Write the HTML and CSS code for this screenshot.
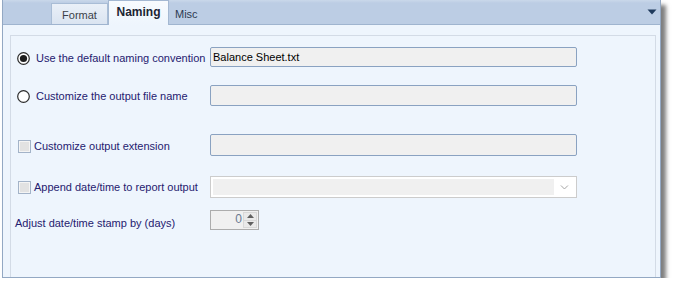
FILE: index.html
```html
<!DOCTYPE html>
<html>
<head>
<meta charset="utf-8">
<link rel="stylesheet" href="styles.css">
</head>
<body>
<div class="window">
  <div class="header">
    <div class="tab tab-format">Format</div>
    <div class="tab tab-active">Naming</div>
    <div class="tab tab-plain">Misc</div>
    <svg class="menu-arrow" width="10" height="6" viewBox="0 0 10 6"><path d="M0.5 0.5 H9.5 L5 5.5 Z" fill="#1f3a5c"/></svg>
  </div>
  <div class="content">
    <div class="group">
      <div class="row row1">
        <div class="ctrl radio-ctrl">
          <svg class="radio" width="13" height="13" viewBox="0 0 13 13"><circle cx="6.5" cy="6.5" r="5.8" fill="#fff" stroke="#2b2b2b" stroke-width="1.2"/><circle cx="6.5" cy="6.5" r="3.6" fill="#1c1c1c"/></svg>
          <span class="lbl">Use the default naming convention</span>
        </div>
        <div class="textbox">Balance Sheet.txt</div>
      </div>
      <div class="row row2">
        <div class="ctrl radio-ctrl">
          <svg class="radio" width="13" height="13" viewBox="0 0 13 13"><circle cx="6.5" cy="6.5" r="5.8" fill="#fff" stroke="#2b2b2b" stroke-width="1.2"/></svg>
          <span class="lbl">Customize the output file name</span>
        </div>
        <div class="textbox"></div>
      </div>
      <div class="row row3">
        <div class="ctrl check-ctrl">
          <span class="check"></span>
          <span class="lbl">Customize output extension</span>
        </div>
        <div class="textbox"></div>
      </div>
      <div class="row row4">
        <div class="ctrl check-ctrl">
          <span class="check"></span>
          <span class="lbl">Append date/time to report output</span>
        </div>
        <div class="combo">
          <div class="combo-fill"></div>
          <svg class="chev" width="20" height="16" viewBox="0 0 20 16"><path d="M7 6.5 L10.5 10 L14 6.5" fill="none" stroke="#a3a3a3" stroke-width="1"/></svg>
        </div>
      </div>
      <div class="row row5">
        <div class="ctrl plain-ctrl">
          <span class="lbl">Adjust date/time stamp by (days)</span>
        </div>
        <div class="spinner">
          <span class="spin-val">0</span>
          <div class="spin-btns">
            <div class="spin-btn"><svg width="7" height="4" viewBox="0 0 7 4"><path d="M0 4 L3.5 0 L7 4 Z" fill="#606060"/></svg></div>
            <div class="spin-btn"><svg width="7" height="4" viewBox="0 0 7 4"><path d="M0 0 L3.5 4 L7 0 Z" fill="#606060"/></svg></div>
          </div>
        </div>
      </div>
    </div>
  </div>
</div>
</body>
</html>
```

FILE: styles.css
```css
html, body {
  margin: 0;
  padding: 0;
  background: #ffffff;
}
body {
  padding-left: 2px;
  font-family: "Liberation Sans", Arial, sans-serif;
  font-size: 11px;
}
.window {
  box-sizing: border-box;
  width: 659px;
  height: 278px;
  border: 1px solid #93a8c3;
  border-top: none;
  display: flex;
  flex-direction: column;
  background: #eef5fd;
  box-shadow: 5px 5px 4px rgba(0, 0, 0, 0.5);
}
.header {
  box-sizing: border-box;
  height: 25px;
  flex: none;
  display: flex;
  align-items: flex-end;
  padding-left: 48px;
  background: linear-gradient(#cad8ea, #bccde4 3px, #bccde4);
  border-bottom: 1px solid #9fb4cf;
}
.tab {
  box-sizing: border-box;
  display: flex;
  align-items: center;
  justify-content: center;
  font-size: 11px;
}
.tab-format {
  width: 57px;
  height: 21px;
  margin-bottom: 0;
  color: #3a3f48;
  background: linear-gradient(#eaf0f8, #dae4f1);
  border: 1px solid #a9bdd6;
  border-bottom: none;
  padding-top: 1px;
}
.tab-active {
  width: 61px;
  height: 25px;
  margin-bottom: -1px;
  color: #1c2433;
  font-weight: bold;
  font-size: 12px;
  background: linear-gradient(#f8fbfe, #eef5fd);
  border: 1px solid #a4b8d2;
  border-bottom: none;
  padding-bottom: 2px;
}
.tab-plain {
  justify-content: flex-start;
  height: 21px;
  padding-left: 6px;
  color: #2c3a52;
  padding-top: 1px;
}
.menu-arrow {
  margin-left: auto;
  margin-right: 3px;
  align-self: flex-start;
  margin-top: 9px;
}
.content {
  flex: 1;
  display: flex;
  flex-direction: column;
  padding: 10px 4px 0 7px;
}
.group {
  flex: 1;
  border: 1px solid #d3dbe6;
  border-bottom: none;
  padding-top: 11px;
  display: flex;
  flex-direction: column;
}
.row {
  display: grid;
  grid-template-columns: 199px 367px;
  align-items: center;
}
.row1 { height: 20px; }
.row2 { height: 21px; margin-top: 18px; }
.row3 { height: 22px; margin-top: 28px; }
.row4 { height: 22px; margin-top: 20px; }
.row5 { height: 20px; margin-top: 12px; }
.ctrl {
  display: flex;
  align-items: center;
  height: 100%;
}
.lbl {
  color: #25206f;
  font-size: 11px;
  white-space: nowrap;
}
.radio-ctrl { padding-left: 6px; }
.radio-ctrl .radio { margin-right: 6px; flex: none; }
.row1 .ctrl { padding-top: 2px; }
.row2 .ctrl { padding-top: 1px; }
.check-ctrl { padding-left: 7px; padding-top: 2px; }
.row4 .check-ctrl { padding-top: 0; }
.check {
  box-sizing: border-box;
  width: 13px;
  height: 13px;
  flex: none;
  margin-right: 3px;
  border: 1px solid #a3b3c8;
  background: #e2e2e2;
  box-shadow: inset 0 0 0 1px #f4f4f4;
}
.plain-ctrl { padding-left: 4px; padding-top: 5px; }
.textbox {
  box-sizing: border-box;
  height: 100%;
  border: 1px solid #8aa2c1;
  border-radius: 2px;
  background: #f0f0f0;
  padding-left: 2px;
  display: flex;
  align-items: center;
  color: #000;
  font-size: 11px;
}
.combo {
  box-sizing: border-box;
  height: 100%;
  border: 1px solid #cccccc;
  background: #ffffff;
  padding: 2px;
  display: flex;
  align-items: stretch;
}
.combo-fill {
  width: 343px;
  background: #f0f0f0;
}
.chev {
  align-self: center;
  margin-left: 0;
}
.spinner {
  box-sizing: border-box;
  width: 49px;
  height: 100%;
  border: 1px solid #acacac;
  background: #f0f0f0;
  display: flex;
  align-items: stretch;
}
.spin-val {
  flex: 1;
  text-align: right;
  padding-right: 1px;
  color: #6a7a90;
  font-size: 12px;
  line-height: 17px;
}
.spin-btns {
  width: 14px;
  margin-right: 1px;
  display: flex;
  flex-direction: column;
  padding: 1px 0;
}
.spin-btn {
  flex: 1;
  display: flex;
  align-items: center;
  justify-content: center;
  background: #e9e9e9;
  border: 1px solid #d8d8d8;
}
.spin-btn + .spin-btn { border-top: none; }
```
